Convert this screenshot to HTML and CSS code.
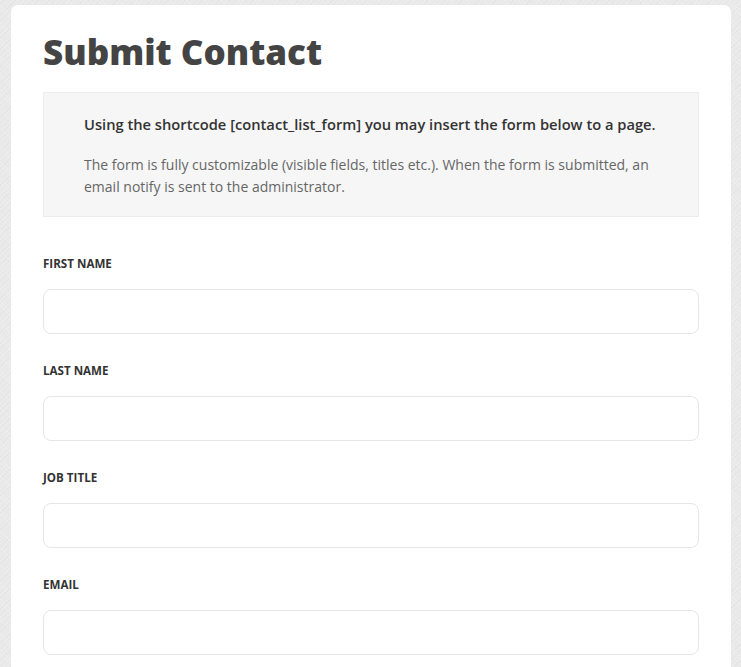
FILE: index.html
```html
<!DOCTYPE html>
<html>
<head>
<meta charset="utf-8">
<link rel="stylesheet" href="styles.css">
</head>
<body>
<div class="card">
  <h1 class="title">Submit Contact</h1>
  <div class="info">
    <p class="info-lead">Using the shortcode [contact_list_form] you may insert the form below to a page.</p>
    <p class="info-text">The form is fully customizable (visible fields, titles etc.). When the form is submitted, an email notify is sent to the administrator.</p>
  </div>
  <form class="form">
    <div class="field">
      <label class="label">First name</label>
      <input class="input" type="text">
    </div>
    <div class="field">
      <label class="label">Last name</label>
      <input class="input" type="text">
    </div>
    <div class="field">
      <label class="label">Job title</label>
      <input class="input" type="text">
    </div>
    <div class="field">
      <label class="label">Email</label>
      <input class="input" type="text">
    </div>
  </form>
  <div class="shade"></div>
</div>
</body>
</html>
```
FILE: styles.css
```css
html, body {
  margin: 0;
  padding: 0;
}
body {
  background-color: #e9e9e9;
  background-image:
    repeating-linear-gradient(45deg, rgba(255,255,255,0.18) 0 1px, rgba(0,0,0,0) 1px 3px),
    repeating-linear-gradient(-45deg, rgba(0,0,0,0.02) 0 1px, rgba(0,0,0,0) 1px 4px);
  font-family: "Open Sans", sans-serif;
  color: #444;
  height: 667px;
  overflow: hidden;
}
.card {
  position: relative;
  margin: 5px 0 0 11px;
  width: 720px;
  box-sizing: border-box;
  background: #fff;
  border-radius: 7px;
  padding: 27px 32px 40px 32px;
  overflow: hidden;
}
.title {
  margin: 0 0 20px 0;
  font-size: 35px;
  font-weight: 800;
  line-height: 40px;
  color: #444;
}
.info {
  background: #f6f6f6;
  border: 1px solid #ececec;
  padding: 20px 40px 18px 40px;
  margin-bottom: 37px;
}
.info p {
  margin: 0;
  font-size: 14px;
  line-height: 22px;
}
.info-lead {
  font-size: 14.7px !important;
  font-weight: 600;
  color: #333;
  margin-bottom: 19px !important;
}
.info-text {
  color: #666;
  font-weight: 400;
}
.form {
  display: flex;
  flex-direction: column;
  gap: 27px;
}
.field {
  display: flex;
  flex-direction: column;
  gap: 17px;
}
.label {
  font-size: 11.6px;
  font-weight: 700;
  text-transform: uppercase;
  color: #333;
  line-height: 16px;
  margin-top: 2px;
}
.input {
  height: 45px;
  box-sizing: border-box;
  border: 1px solid #e6e6e6;
  border-radius: 8px;
  background: #fff;
  font-family: inherit;
  font-size: 14px;
  padding: 0 12px;
  margin: 0;
  outline: none;
}
.shade {
  position: absolute;
  left: 0;
  right: 0;
  bottom: 0;
  height: 70px;
  pointer-events: none;
  background: radial-gradient(ellipse 560px 55px at 600px 95px, rgba(0,0,0,0.09), rgba(0,0,0,0) 100%);
}
```
